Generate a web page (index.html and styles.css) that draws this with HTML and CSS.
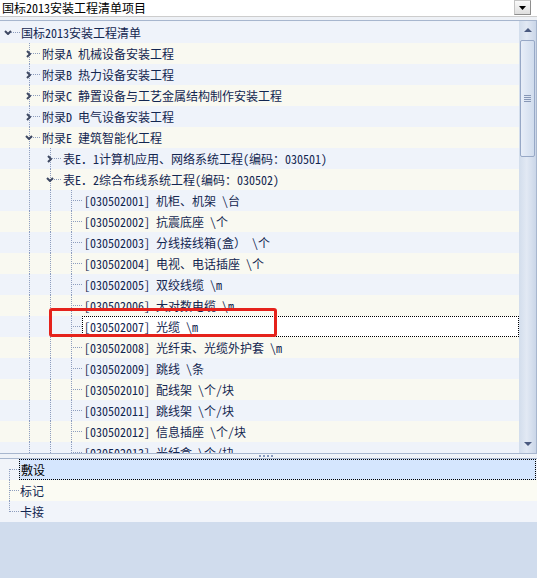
FILE: index.html
```html
<!DOCTYPE html>
<html>
	<head>
		<meta charset="utf-8">
		<title>清单项目</title>
		<link rel="stylesheet" href="styles.css">
	</head>
	<body>
		<div class="combo">
			<span class="combo-text">国标2013安装工程清单项目</span>
			<span class="combo-btn"><svg width="7" height="4" viewBox="0 0 7 4"><path d="M0 0h7L3.5 4z"/></svg></span>
		</div>
		<div class="gap"></div>
		<div class="tree-frame">
			<div class="tree">
				<div class="row"><span class="c n0"><svg class="ex" viewBox="0 0 8 5"><path d="M1 1l3 3 3-3"/></svg></span><span class="t">国标2013安装工程清单</span></div>
				<div class="row"><span class="c"></span><span class="c n"><svg class="co" viewBox="0 0 5 8"><path d="M1 1l3 3-3 3"/></svg></span><span class="t">附录A 机械设备安装工程</span></div>
				<div class="row"><span class="c"></span><span class="c n"><svg class="co" viewBox="0 0 5 8"><path d="M1 1l3 3-3 3"/></svg></span><span class="t">附录B 热力设备安装工程</span></div>
				<div class="row"><span class="c"></span><span class="c n"><svg class="co" viewBox="0 0 5 8"><path d="M1 1l3 3-3 3"/></svg></span><span class="t">附录C 静置设备与工艺金属结构制作安装工程</span></div>
				<div class="row"><span class="c"></span><span class="c n"><svg class="co" viewBox="0 0 5 8"><path d="M1 1l3 3-3 3"/></svg></span><span class="t">附录D 电气设备安装工程</span></div>
				<div class="row"><span class="c"></span><span class="c n"><svg class="ex" viewBox="0 0 8 5"><path d="M1 1l3 3 3-3"/></svg></span><span class="t">附录E 建筑智能化工程</span></div>
				<div class="row"><span class="c"></span><span class="c v"></span><span class="c n"><svg class="co" viewBox="0 0 5 8"><path d="M1 1l3 3-3 3"/></svg></span><span class="t">表E．1计算机应用、网络系统工程(编码：030501)</span></div>
				<div class="row"><span class="c"></span><span class="c v"></span><span class="c n"><svg class="ex" viewBox="0 0 8 5"><path d="M1 1l3 3 3-3"/></svg></span><span class="t">表E．2综合布线系统工程(编码：030502)</span></div>
				<div class="row"><span class="c"></span><span class="c v"></span><span class="c v"></span><span class="c n"></span><span class="t">[030502001] 机柜、机架 \台</span></div>
				<div class="row"><span class="c"></span><span class="c v"></span><span class="c v"></span><span class="c n"></span><span class="t">[030502002] 抗震底座 \个</span></div>
				<div class="row"><span class="c"></span><span class="c v"></span><span class="c v"></span><span class="c n"></span><span class="t">[030502003] 分线接线箱(盒） \个</span></div>
				<div class="row"><span class="c"></span><span class="c v"></span><span class="c v"></span><span class="c n"></span><span class="t">[030502004] 电视、电话插座 \个</span></div>
				<div class="row"><span class="c"></span><span class="c v"></span><span class="c v"></span><span class="c n"></span><span class="t">[030502005] 双绞线缆 \m</span></div>
				<div class="row"><span class="c"></span><span class="c v"></span><span class="c v"></span><span class="c n"></span><span class="t">[030502006] 大对数电缆 \m</span></div>
				<div class="row cur"><span class="c"></span><span class="c v"></span><span class="c v"></span><span class="c n"></span><span class="t sel">[030502007] 光缆 \m</span><span class="mark"></span></div>
				<div class="row"><span class="c"></span><span class="c v"></span><span class="c v"></span><span class="c n"></span><span class="t">[030502008] 光纤束、光缆外护套 \m</span></div>
				<div class="row"><span class="c"></span><span class="c v"></span><span class="c v"></span><span class="c n"></span><span class="t">[030502009] 跳线 \条</span></div>
				<div class="row"><span class="c"></span><span class="c v"></span><span class="c v"></span><span class="c n"></span><span class="t">[030502010] 配线架 \个/块</span></div>
				<div class="row"><span class="c"></span><span class="c v"></span><span class="c v"></span><span class="c n"></span><span class="t">[030502011] 跳线架 \个/块</span></div>
				<div class="row"><span class="c"></span><span class="c v"></span><span class="c v"></span><span class="c n"></span><span class="t">[030502012] 信息插座 \个/块</span></div>
				<div class="row"><span class="c"></span><span class="c v"></span><span class="c v"></span><span class="c n"></span><span class="t">[030502013] 光纤盒 \个/块</span></div>
			</div>
			<div class="vscroll">
				<span class="arrow"><svg width="8" height="4" viewBox="0 0 8 4"><path d="M4 0L8 4H0z"/></svg></span>
				<span class="thumb"><span class="grip"></span></span>
				<span class="track"></span>
				<span class="arrow"><svg width="8" height="4" viewBox="0 0 8 4"><path d="M0 0h8L4 4z"/></svg></span>
			</div>
		</div>
		<div class="splitter"><span class="dot"></span><span class="dot"></span><span class="dot"></span><span class="dot"></span></div>
		<div class="sub">
			<div class="srow"><span class="sc first"></span><span class="t sel">敷设</span></div>
			<div class="srow"><span class="sc mid"></span><span class="t">标记</span></div>
			<div class="srow"><span class="sc last"></span><span class="t">卡接</span></div>
		</div>
	</body>
</html>
```

FILE: styles.css
```css
body {margin:0;width:537px;height:578px;overflow:hidden;background-color:#d0dced;color:#132650;font-family:"Noto Sans Mono CJK SC","Noto Sans CJK SC",sans-serif;font-size:12px;line-height:21px;}

/* top combo box */
.combo {display:flex;height:16px;background-color:#fff;border-bottom:1px solid #cdcdcd;}
.combo-text {flex:1;padding-left:2px;line-height:16px;color:#000;white-space:nowrap;}
.combo-btn {width:17px;height:15px;margin-right:6px;display:flex;align-items:center;justify-content:center;box-sizing:border-box;border:1px solid #c4c4c4;border-right-color:#8e8e8e;border-bottom-color:#8e8e8e;background:linear-gradient(#fafafa,#dedede);}
.gap {height:3px;background-color:#eef1f6;}

/* tree */
.tree-frame {display:flex;height:432px;border-top:1px solid #a7b6ce;border-bottom:1px solid #a7b6ce;border-right:1px solid #a7b6ce;}
.tree {flex:1;overflow:hidden;padding-top:1px;background-color:#eef2f9;}
.row {position:relative;display:flex;height:21px;background-color:#eff3fa;white-space:nowrap;}
.row:nth-child(even) {background-color:#f9f9f1;}
.c {flex:none;width:21px;height:21px;display:flex;align-items:center;background-repeat:no-repeat;}
.c.v {background-image:repeating-linear-gradient(to bottom,#8d9dbe 0 1px,transparent 1px 2px);background-size:1px 100%;background-position:8px 0;}
.c.n {background-image:repeating-linear-gradient(to bottom,#8d9dbe 0 1px,transparent 1px 2px),repeating-linear-gradient(to right,#8d9dbe 0 1px,transparent 1px 2px);background-size:1px 100%,9px 1px;background-position:8px 0,10px 10px;}
.c.n0 {background-image:repeating-linear-gradient(to right,#8d9dbe 0 1px,transparent 1px 2px);background-size:9px 1px;background-position:11px 10px;}
.c svg {fill:none;stroke:#3e4862;stroke-width:2;}
.c svg.co {width:5px;height:8px;margin-left:5px;}
.c svg.ex {width:8px;height:5px;margin-left:4px;}
.t {white-space:nowrap;}
.t.sel {flex:1;margin-left:-2px;padding-left:1px;background-color:#fff;border:1px dotted #000;line-height:19px;}
.mark {position:absolute;left:49px;top:-8px;width:228px;height:29px;box-sizing:border-box;border:3px solid #e5221b;border-radius:3px;}

/* scrollbar */
.vscroll {flex:none;width:17px;display:flex;flex-direction:column;align-items:center;background:linear-gradient(to right,#d2ddec,#e2e9f4 45%,#cad6e8);}
.arrow {height:18px;display:flex;align-items:center;justify-content:center;}
.arrow svg {fill:#4a5a80;}
.thumb {width:15px;height:117px;margin-top:1px;box-sizing:border-box;border:1px solid #97a8c6;border-radius:2px;background:linear-gradient(to right,#e8eef8,#d0dced);display:flex;align-items:center;justify-content:center;}
.grip {width:7px;height:7px;background:repeating-linear-gradient(to bottom,#8797b6 0 1px,transparent 1px 2px);}
.track {flex:1;}

/* splitter */
.splitter {height:4px;display:flex;gap:2px;padding-left:259px;background-color:#eef2f8;}
.dot {width:2px;height:2px;margin-top:1px;background-color:#8a9cc0;}

/* lower list */
.sub {border-top:1px solid #a7b6ce;}
.srow {display:flex;height:21px;background-color:#f1f4fa;}
.srow:nth-child(even) {background-color:#fbfbf3;}
.srow .t {padding-left:1px;}
.srow .t.sel {margin-left:0;margin-right:1px;background-color:#d5e6fe;color:#000;}
.sc {flex:none;width:19px;height:21px;background-repeat:no-repeat;background-image:repeating-linear-gradient(to bottom,#8d9dbe 0 1px,transparent 1px 2px),repeating-linear-gradient(to right,#8d9dbe 0 1px,transparent 1px 2px);background-size:1px 100%,9px 1px;background-position:9px 0,10px 10px;}
.sc.first {background-size:1px 11px,9px 1px;background-position:9px 10px,10px 10px;}
.sc.last {background-size:1px 11px,9px 1px;background-position:9px 0,10px 10px;}
```
